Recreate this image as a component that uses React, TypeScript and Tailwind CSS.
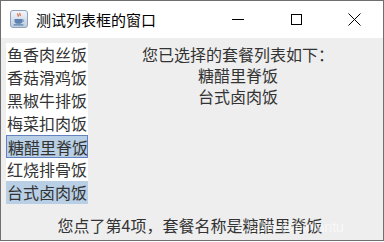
const items = ['鱼香肉丝饭', '香菇滑鸡饭', '黑椒牛排饭', '梅菜扣肉饭', '糖醋里脊饭', '红烧排骨饭', '台式卤肉饭'];
const selected = [4, 6];
const focusIndex = 4;

const JavaIcon = () => (
  <svg width="18" height="18" viewBox="0 0 18 18">
    <defs>
      <linearGradient id="jbg" x1="0" y1="0" x2="0" y2="1">
        <stop offset="0" stopColor="#f4f7fb" />
        <stop offset="1" stopColor="#bccbdc" />
      </linearGradient>
    </defs>
    <rect x="0.5" y="0.5" width="17" height="17" rx="2.5" fill="url(#jbg)" stroke="#8ea3bd" />
    <path d="M8 3.5c-1.2 1 1.2 1.8 0 3.2M10 3c-1 1.2 1 1.6 0 3" stroke="#e0592a" strokeWidth="1.1" fill="none" />
    <path d="M4.5 9h8v2.2c0 1.6-1.6 2.6-4 2.6s-4-1-4-2.6z" fill="#5b82b0" />
    <path d="M12.5 9.6c1.6 0 1.6 2 0 2" stroke="#5b82b0" strokeWidth="0.9" fill="none" />
    <rect x="3.5" y="14.3" width="10" height="1.2" rx="0.6" fill="#5b82b0" />
  </svg>
);

export default function App() {
  return (
    <div
      className="relative w-[384px] h-[241px] border border-[#6f6f6f] flex flex-col overflow-hidden text-[#333333]"
      style={{ fontFamily: '"Noto Sans CJK SC", sans-serif' }}
    >
      {/* title bar */}
      <div className="h-[37px] bg-white flex items-center shrink-0">
        <div className="ml-[9px] mt-[-1px]">
          <JavaIcon />
        </div>
        <span className="ml-[8px] text-[15px] leading-none text-black">测试列表框的窗口</span>
        <div className="ml-auto flex h-full">
          <div className="w-[58px] h-full flex items-center justify-center">
            <div className="w-[12px] h-px bg-black" />
          </div>
          <div className="w-[58px] h-full flex items-center justify-center">
            <div className="w-[11px] h-[11px] border border-black" />
          </div>
          <div className="w-[58px] h-full flex items-center justify-center">
            <svg width="13" height="13" viewBox="0 0 13 13">
              <path d="M0.5 0.5L12.5 12.5M12.5 0.5L0.5 12.5" stroke="#000" strokeWidth="1" />
            </svg>
          </div>
        </div>
      </div>

      {/* content */}
      <div className="flex-1 bg-[#eeeeee] flex flex-col">
        <div className="flex-1 flex">
          <ul className="ml-[5px] mt-[5px] w-[82px] bg-white self-start">
            {items.map((name, i) => (
              <li
                key={name}
                className={`h-[23px] pl-px text-[16px] leading-[23px] whitespace-nowrap ${
                  selected.includes(i) ? 'bg-[#b8cfe5]' : ''
                } ${i === focusIndex ? 'border border-[#6382bf] pl-0 leading-[21px]' : ''}`}
              >
                {name}
              </li>
            ))}
          </ul>
          <div className="flex-1 pl-[5px] pt-[6px] text-center text-[16px] leading-[21px]">
            <p>您已选择的套餐列表如下：</p>
            <p>糖醋里脊饭</p>
            <p>台式卤肉饭</p>
          </div>
        </div>
        <div className="h-[21px] mb-[4px] pr-[4px] text-center text-[16px] leading-[21px]">
          您点了第4项，套餐名称是糖醋里脊饭
        </div>
      </div>

      {/* watermark */}
      <span
        className="absolute left-[236px] top-[216px] text-[14px] text-white/60 pointer-events-none"
        style={{ fontFamily: '"Liberation Sans", sans-serif' }}
      >
        CSDN @binlantu
      </span>
    </div>
  );
}
